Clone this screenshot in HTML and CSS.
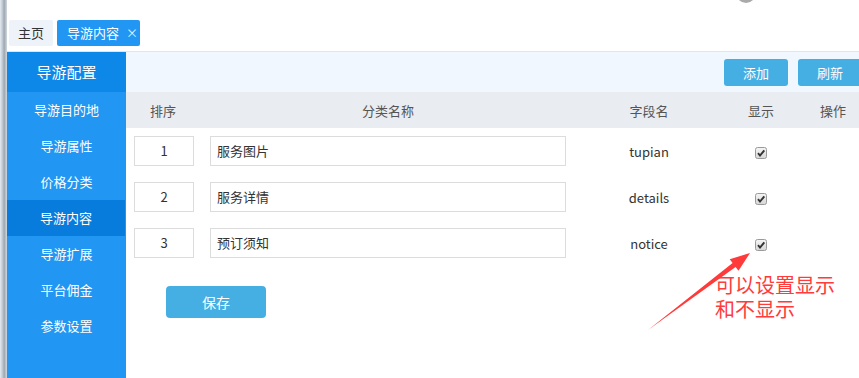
FILE: index.html
```html
<!DOCTYPE html>
<html lang="zh-CN">
<head>
  <meta charset="UTF-8">
  <title>导游内容</title>
  <link rel="stylesheet" href="styles.css">
</head>
<body>
<div class="frame">
  <div class="edge"></div>
  <div class="app">
    <div class="topbar"><span class="avatar"></span></div>

    <ul class="tabs">
      <li class="tab">主页</li>
      <li class="tab current">导游内容<span class="close">×</span></li>
    </ul>

    <div class="layout">
      <ul class="side">
        <li class="side-title">导游配置</li>
        <li>导游目的地</li>
        <li>导游属性</li>
        <li>价格分类</li>
        <li class="active">导游内容</li>
        <li>导游扩展</li>
        <li>平台佣金</li>
        <li>参数设置</li>
      </ul>

      <div class="main">
        <div class="inner">
          <div class="toolbar">
            <span class="btn">添加</span>
            <span class="btn">刷新</span>
          </div>

          <table class="grid">
            <colgroup>
              <col class="c-sort">
              <col class="c-name">
              <col class="c-field">
              <col class="c-show">
              <col class="c-op">
            </colgroup>
            <thead>
              <tr>
                <th>排序</th>
                <th>分类名称</th>
                <th>字段名</th>
                <th>显示</th>
                <th>操作</th>
              </tr>
            </thead>
            <tbody>
              <tr>
                <td><span class="box num">1</span></td>
                <td><span class="box text">服务图片</span></td>
                <td>tupian</td>
                <td><span class="check"><svg width="12" height="12" viewBox="0 0 12 12"><defs><linearGradient id="g1" x1="0" y1="0" x2="0" y2="1"><stop offset="0" stop-color="#f6f6f6"/><stop offset="1" stop-color="#d6d6d6"/></linearGradient></defs><rect x=".5" y=".5" width="11" height="11" rx="2" fill="url(#g1)" stroke="#9a9a9a"/><path d="M3 6.2 L5 8.6 L9.3 3.4" fill="none" stroke="#333" stroke-width="1.9"/></svg></span></td>
                <td></td>
              </tr>
              <tr>
                <td><span class="box num">2</span></td>
                <td><span class="box text">服务详情</span></td>
                <td>details</td>
                <td><span class="check"><svg width="12" height="12" viewBox="0 0 12 12"><rect x=".5" y=".5" width="11" height="11" rx="2" fill="url(#g1)" stroke="#9a9a9a"/><path d="M3 6.2 L5 8.6 L9.3 3.4" fill="none" stroke="#333" stroke-width="1.9"/></svg></span></td>
                <td></td>
              </tr>
              <tr>
                <td><span class="box num">3</span></td>
                <td><span class="box text">预订须知</span></td>
                <td>notice</td>
                <td><span class="check"><svg width="12" height="12" viewBox="0 0 12 12"><rect x=".5" y=".5" width="11" height="11" rx="2" fill="url(#g1)" stroke="#9a9a9a"/><path d="M3 6.2 L5 8.6 L9.3 3.4" fill="none" stroke="#333" stroke-width="1.9"/></svg></span></td>
                <td></td>
              </tr>
            </tbody>
          </table>

          <div class="actions">
            <span class="btn save">保存</span>
          </div>
        </div>
      </div>
    </div>
  </div>

  <!-- 标注 -->
  <svg class="arrow" width="859" height="378" viewBox="0 0 859 378">
    <polygon points="648,330 735.6,267 738.5,270.8 750,253 729.7,259.2 732.6,263" fill="#ff3a3a"/>
  </svg>
  <div class="note">
    <span>可以设置显示</span>
    <span>和不显示</span>
  </div>
</div>
</body>
</html>
```

FILE: styles.css
```css
* {
  margin: 0;
  padding: 0;
  box-sizing: border-box;
}

html, body {
  width: 859px;
  height: 378px;
  overflow: hidden;
  background: #fff;
}

body {
  font-family: "Noto Sans CJK SC", "Noto Sans", sans-serif;
  font-size: 13px;
  color: #333;
}

ul {
  list-style: none;
}

.frame {
  position: relative;
  display: flex;
  height: 378px;
}

.edge {
  width: 7px;
  flex: none;
  background: linear-gradient(to right, #e4eaf1 0, #b9c3cd 40%, #9ea7b0 60%, #d2d9e0 100%);
}

.app {
  flex: 1;
  min-width: 0;
  display: flex;
  flex-direction: column;
}

.topbar {
  height: 20px;
  flex: none;
}

.avatar {
  display: block;
  width: 20px;
  height: 20px;
  margin: -17px 0 0 729px;
  border-radius: 50%;
  background: #aaa;
}

.tabs {
  display: flex;
  gap: 4px;
  height: 26px;
  margin: 0 0 5px 2px;
  flex: none;
}

.tab {
  height: 26px;
  line-height: 26px;
  padding: 0 9px;
  border-radius: 2px;
  background: #eef2f9;
  color: #333;
}

.tab.current {
  width: 83px;
  padding: 0 0 0 10px;
  background: #2196f3;
  color: #fff;
}

.close {
  margin-left: 7px;
  font-size: 12px;
  color: #e6f2fd;
}

.layout {
  flex: 1;
  display: flex;
  border-top: 1px solid #dde5ee;
  min-height: 0;
}

.side {
  width: 119px;
  flex: none;
  background: #2196f3;
  color: #fff;
}

.side > li {
  height: 36px;
  line-height: 36px;
  text-align: center;
}

.side > .side-title {
  height: 40px;
  line-height: 40px;
  font-size: 15px;
  background: #0e88e8;
}

.side > .active {
  background: #077cdc;
  margin-right: 1px;
}

.main {
  flex: 1;
  min-width: 0;
  overflow: hidden;
}

.inner {
  width: 740px;
}

.toolbar {
  display: flex;
  justify-content: flex-end;
  align-items: center;
  gap: 10px;
  height: 40px;
  padding-right: 4px;
  background: #f0f7fe;
}

.btn {
  display: inline-block;
  width: 64px;
  height: 27px;
  line-height: 27px;
  border-radius: 3px;
  background: #45aee3;
  color: #fff;
  text-align: center;
}

.grid {
  width: 740px;
  table-layout: fixed;
  border-collapse: collapse;
}

.c-sort { width: 74px; }
.c-name { width: 376px; }
.c-field { width: 146px; }
.c-show { width: 78px; }
.c-op { width: 66px; }

.grid th {
  height: 36px;
  background: #e9ecf0;
  font-weight: normal;
  color: #555;
}

.grid td {
  height: 46px;
  text-align: center;
  vertical-align: middle;
}

.box {
  display: block;
  height: 30px;
  line-height: 28px;
  border: 1px solid #dcdcdc;
  background: #fff;
}

.box.num {
  width: 60px;
  margin-left: 8px;
}

.box.text {
  margin: 0 10px;
  padding-left: 6px;
  text-align: left;
}

.check {
  display: inline-block;
  width: 12px;
  height: 12px;
  vertical-align: middle;
}

.check svg {
  display: block;
}

.actions {
  padding: 20px 0 0 40px;
}

.btn.save {
  width: 100px;
  height: 32px;
  line-height: 32px;
  border-radius: 4px;
  font-size: 14px;
}

.arrow {
  position: absolute;
  left: 0;
  top: 0;
  pointer-events: none;
}

.note {
  position: absolute;
  left: 715px;
  top: 273px;
  display: flex;
  flex-direction: column;
  gap: 0;
  font-size: 20px;
  line-height: 24px;
  color: #ff3b3b;
}
```
